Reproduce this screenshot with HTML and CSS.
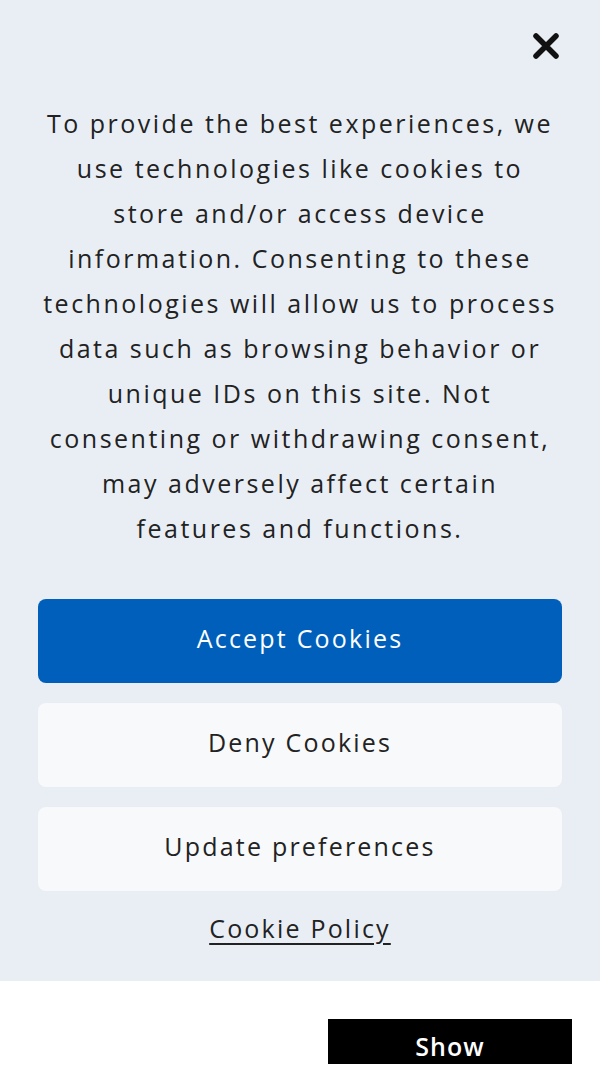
FILE: index.html
```html
<!DOCTYPE html>
<html lang="en">
<head>
<meta charset="UTF-8">
<meta name="viewport" content="width=device-width, initial-scale=1.0">
<title>Cookie consent</title>
<link rel="stylesheet" href="styles.css">
</head>
<body>
    <div class="consent">
        <div class="consent-header">
            <button class="close-btn" aria-label="Close">
                <svg width="28" height="28" viewBox="0 0 28 28">
                    <path d="M4 4 L24 24 M24 4 L4 24" stroke="#111" stroke-width="5.5" stroke-linecap="round"/>
                </svg>
            </button>
        </div>
        <p class="consent-text">To provide the best experiences, we use technologies like cookies to store and/or access device information. Consenting to these technologies will allow us to process data such as browsing behavior or unique IDs on this site. Not consenting or withdrawing consent, may adversely affect certain features and functions.</p>
        <div class="consent-buttons">
            <button class="btn btn-accept">Accept Cookies</button>
            <button class="btn btn-light">Deny Cookies</button>
            <button class="btn btn-light">Update preferences</button>
        </div>
        <a class="policy-link" href="#">Cookie Policy</a>
    </div>
    <div class="below">
        <button class="show-btn">Show</button>
    </div>
</body>
</html>
```

FILE: styles.css
```css
body, html {
    margin: 0;
    padding: 0;
}

body {
    font-family: "Open Sans", "Noto Sans", sans-serif;
    letter-spacing: 2.2px;
    background: #fff;
    color: #222;
}

.consent {
    background: #e9eef5;
    padding: 30px 38px 36px;
    display: flex;
    flex-direction: column;
    align-items: center;
}

.consent-header {
    align-self: stretch;
    display: flex;
    justify-content: flex-end;
}

.close-btn {
    background: none;
    border: none;
    padding: 0;
    width: 32px;
    height: 32px;
    display: flex;
    align-items: center;
    justify-content: center;
    cursor: pointer;
}

.consent-text {
    width: 514px;
    margin: 39px 0 48px;
    font-size: 25px;
    letter-spacing: 2.5px;
    line-height: 45px;
    text-align: center;
    color: #222;
}

.consent-buttons {
    align-self: stretch;
    display: flex;
    flex-direction: column;
    gap: 20px;
}

.btn {
    height: 84px;
    padding-bottom: 7px;
    border: none;
    border-radius: 8px;
    font-family: inherit;
    letter-spacing: inherit;
    font-size: 25px;
    cursor: pointer;
}

.btn-accept {
    background: #005fbb;
    color: #fff;
}

.btn-light {
    background: #f8f9fa;
    color: #222;
}

.policy-link {
    margin-top: 20px;
    font-size: 25px;
    color: #222;
    text-decoration: underline;
    text-underline-offset: 5px;
}

.below {
    display: flex;
    justify-content: flex-end;
    padding: 38px 28px 0;
    height: 45px;
}

.show-btn {
    width: 244px;
    height: 50px;
    background: #000;
    color: #fff;
    border: none;
    font-family: inherit;
    letter-spacing: 1px;
    font-size: 25px;
    font-weight: 600;
    padding-top: 4px;
    align-self: flex-start;
}
```
